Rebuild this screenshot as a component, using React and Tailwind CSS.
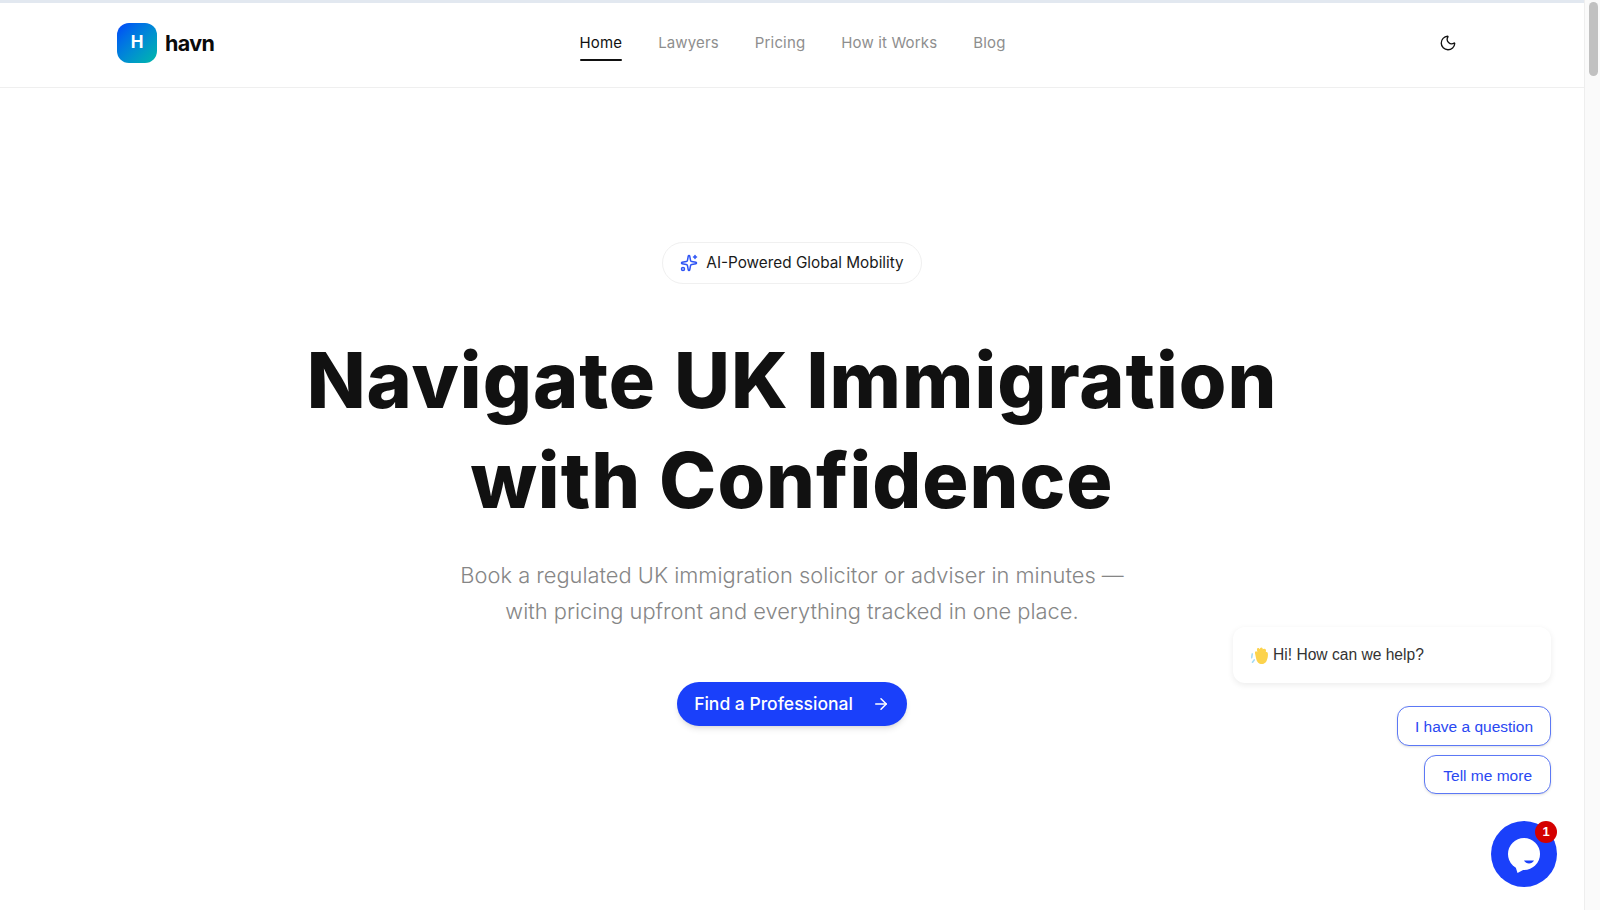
import React from "react";
import { Moon, Sparkles, ArrowRight } from "lucide-react";

const sans = "[font-family:Inter,'Liberation_Sans',sans-serif]";

function WaveHand() {
  return (
    <svg width="18" height="19" viewBox="0 0 17 18" className="shrink-0" aria-hidden="true">
      <path d="M1.2 7.5 L0.6 11 M3 13.2 L1.4 15.4" stroke="#a5dcf5" strokeWidth="1.5" strokeLinecap="round" />
      <path d="M4 8 C3 5 5 4 6 6 L5.6 3.5 C5.4 1.5 7.6 1.2 8 3 L8.6 2.2 C9.5 0.6 11.4 1.4 11 3 L12.4 2.6 C14 2.4 14.6 4 14 5.4 L15.4 6 C16.6 7 16 12 14.6 14.4 C13 17.4 9 18 6.6 15.6 C5 14 4.6 11 4 8 Z" fill="#fcd34d" />
    </svg>
  );
}

function NavLink({ label, active }) {
  return (
    <a className={active ? "relative py-2 text-[15px] font-normal tracking-[0.15px] text-[#111111]" : "py-2 text-[15px] font-normal tracking-[0.15px] text-[#8e8e8e]"}>
      {label}
      {active && <span className="absolute left-0 right-0 bottom-[2px] h-[2px] rounded-full bg-[#111111]" />}
    </a>
  );
}

export default function App() {
  return (
    <div className={`relative flex h-[910px] w-[1600px] overflow-hidden bg-white ${sans}`}>
      <div className="flex min-w-0 flex-1 flex-col border-t-[3px] border-[#e2e8f0]">
        <header className="flex h-[85px] shrink-0 items-center justify-between border-b border-[#efefef] pb-[5px] pl-[117px] pr-[127px]">
          <div className="flex w-[211px] items-center gap-[8px]">
            <div className="flex h-10 w-10 items-center justify-center rounded-xl bg-gradient-to-br from-[#1a40fa] to-[#0cb8a8] text-[17px] font-bold text-white">H</div>
            <span className="mt-[2px] text-[21.5px] font-bold tracking-[-0.6px] text-[#0a0a0a]">havn</span>
          </div>
          <nav className="mt-[2px] flex items-center gap-9">
            <NavLink label="Home" active />
            <NavLink label="Lawyers" />
            <NavLink label="Pricing" />
            <NavLink label="How it Works" />
            <NavLink label="Blog" />
          </nav>
          <div className="flex w-[200px] justify-end">
            <Moon size={18} strokeWidth={1.75} className="text-[#111111]" />
          </div>
        </header>
        <main className="flex flex-1 flex-col items-center pt-[154px]">
          <div className="flex h-[42px] w-[260px] items-center justify-center gap-2 rounded-full border border-[#f0f0f0] bg-white text-[15.3px] font-normal text-[#1a1a1a]">
            <Sparkles size={18} strokeWidth={2} className="text-[#2f55f5]" />
            <span>AI-Powered Global Mobility</span>
          </div>
          <h1 className="mt-[46px] text-center text-[77px] font-extrabold leading-[100px] tracking-[1px] text-[#111111]">
            Navigate UK Immigration<br />with Confidence
          </h1>
          <p className="mt-[27px] text-center text-[21.85px] font-light leading-[36px] text-[#868686]">
            Book a regulated UK immigration solicitor or adviser in minutes —<br />with pricing upfront and everything tracked in one place.
          </p>
          <button className="mt-[53px] flex h-[44px] w-[230px] items-center justify-center gap-[19px] rounded-full bg-[#1a40fa] text-[17.5px] font-medium text-white shadow-md">
            <span>Find a Professional</span>
            <ArrowRight size={18} strokeWidth={2} />
          </button>
        </main>
      </div>
      <div className="w-[16px] shrink-0 border-l border-[#eeeeee] bg-[#fafafa] pl-[4px] pt-[2px]">
        <div className="h-[74px] w-[9px] rounded-full bg-[#c1c1c1]" />
      </div>

      <div className="absolute bottom-[23px] right-[49px] flex flex-col items-end [font-family:'Liberation_Sans',Arial,sans-serif]">
        <div className="flex h-[56px] w-[318px] items-center gap-[4px] rounded-xl bg-white pl-[18px] text-[15.6px] text-[#333333] shadow-[0_2px_6px_rgba(0,0,0,0.08)]">
          <WaveHand />
          <span>Hi! How can we help?</span>
        </div>
        <button className="mt-[23px] flex h-[40px] items-center rounded-xl border border-[#5c78f5] bg-white px-[17px] pt-[2px] text-[15.5px] text-[#2a48f2] shadow-sm">I have a question</button>
        <button className="mt-[9px] flex h-[39px] items-center rounded-xl border border-[#5c78f5] bg-white px-[18px] pt-[2px] text-[15.5px] text-[#2a48f2] shadow-sm">Tell me more</button>
        <div className="relative mr-[-6px] mt-[27px] flex h-[66px] w-[66px] items-center justify-center rounded-full bg-[#1a40fa]">
          <svg width="34" height="38" viewBox="0 0 34 38" className="mt-[4px]" aria-hidden="true">
            <circle cx="17" cy="17" r="16" fill="#ffffff" />
            <path d="M8 28 L10.5 36 L18 32 Z" fill="#ffffff" />
            <path d="M17 23.5 C19 27.5 25 27.5 27 23.5 Z" fill="#1a40fa" />
          </svg>
          <span className="absolute right-0 top-0 flex h-[22px] w-[22px] items-center justify-center rounded-full bg-[#d40000] text-[13px] font-bold text-white">1</span>
        </div>
      </div>
    </div>
  );
}
